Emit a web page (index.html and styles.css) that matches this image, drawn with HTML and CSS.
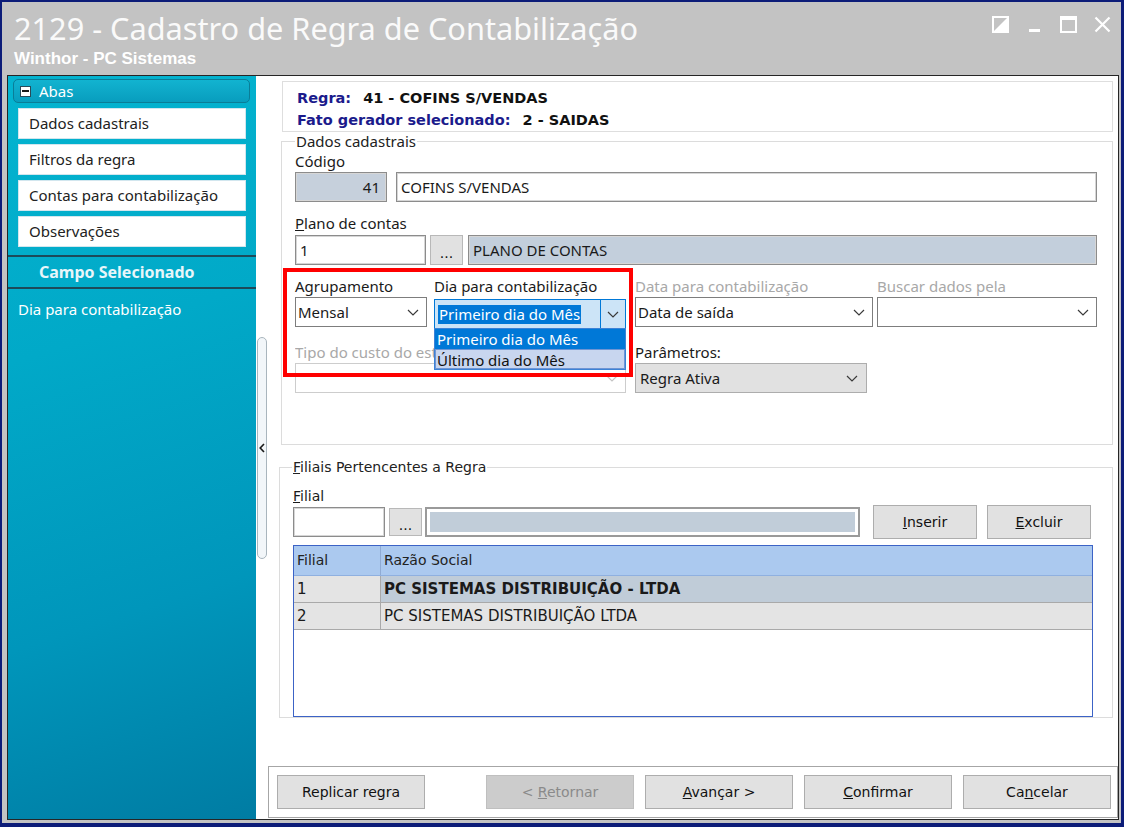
FILE: index.html
```html
<!DOCTYPE html>
<html lang="pt-BR">
<head>
<meta charset="utf-8">
<title>2129 - Cadastro de Regra de Contabilização</title>
<link rel="stylesheet" href="styles.css">
</head>
<body>
<div class="app">
  <div class="window">
    <header class="titlebar">
      <div class="titles">
        <div class="title">2129 - Cadastro de Regra de Contabilização</div>
        <div class="subtitle">Winthor - PC Sistemas</div>
      </div>
      <div class="controls">
        <svg viewBox="0 0 17 17"><rect x="1" y="1" width="15" height="15" fill="none" stroke="#fff" stroke-width="2"/><polygon points="16,1 16,16 1,16" fill="#fff"/></svg>
        <svg viewBox="0 0 17 17"><rect x="3" y="13" width="11" height="3" fill="#fff"/></svg>
        <svg viewBox="0 0 17 17"><rect x="1" y="1" width="15" height="15" fill="none" stroke="#fff" stroke-width="2"/><rect x="0" y="0" width="17" height="4" fill="#fff"/></svg>
        <svg viewBox="0 0 17 17"><path d="M1.5 1.5 L15.5 15.5 M15.5 1.5 L1.5 15.5" stroke="#fff" stroke-width="2.2" fill="none"/></svg>
      </div>
    </header>
    <div class="frame">
      <aside class="sidebar">
        <div class="abas-head"><span class="minus-box"></span><span>Abas</span></div>
        <ul class="tabs">
          <li>Dados cadastrais</li>
          <li>Filtros da regra</li>
          <li>Contas para contabilização</li>
          <li>Observações</li>
        </ul>
        <div class="campo-head">Campo Selecionado</div>
        <div class="campo-value">Dia para contabilização</div>
      </aside>
      <div class="splitter">
        <div class="split-bar">
          <svg viewBox="0 0 6 10" class="split-chev"><polyline points="5,1 1.2,5 5,9" fill="none" stroke="#1a1a1a" stroke-width="1.6"/></svg>
        </div>
      </div>
      <main class="main">
        <div class="content">
          <div class="info-panel">
            <div><span class="info-key">Regra:</span><span class="info-val">41 - COFINS S/VENDAS</span></div>
            <div><span class="info-key">Fato gerador selecionado:</span><span class="info-val">2 - SAIDAS</span></div>
          </div>

          <fieldset class="group dados">
            <legend class="legend">Dados cadastrais</legend>
            <div class="dados-body">
              <div class="lbl first">Código</div>
              <div class="row code-row">
                <div class="input code">41</div>
                <div class="input name">COFINS S/VENDAS</div>
              </div>
              <div class="lbl gap12"><u>P</u>lano de contas</div>
              <div class="row plano-row">
                <div class="input plano">1</div>
                <div class="dots">...</div>
                <div class="input desc">PLANO DE CONTAS</div>
              </div>
              <div class="rows34">
                <div class="redbox"></div>
                <div class="row fields">
                  <div class="field w-agr">
                    <div class="lbl gap12">Agrupamento</div>
                    <div class="combo">
                      <span class="ctext">Mensal</span>
                      <svg class="chev" viewBox="0 0 12 7"><polyline points="1,1 6,6 11,1"/></svg>
                    </div>
                  </div>
                  <div class="field w-dia">
                    <div class="lbl gap12">Dia para contabilização</div>
                    <div class="combo-wrap">
                      <div class="combo focus">
                        <span class="ctext"><span class="hl">Primeiro dia do Mês</span></span>
                        <span class="dbtn"><svg class="chev" viewBox="0 0 12 7"><polyline points="1,1 6,6 11,1"/></svg></span>
                      </div>
                      <ul class="droplist">
                        <li class="on">Primeiro dia do Mês</li>
                        <li class="hov">Último dia do Mês</li>
                      </ul>
                    </div>
                  </div>
                  <div class="field w-data">
                    <div class="lbl gap12 dis">Data para contabilização</div>
                    <div class="combo">
                      <span class="ctext">Data de saída</span>
                      <svg class="chev" viewBox="0 0 12 7"><polyline points="1,1 6,6 11,1"/></svg>
                    </div>
                  </div>
                  <div class="field w-busca">
                    <div class="lbl gap12 dis">Buscar dados pela</div>
                    <div class="combo">
                      <span class="ctext"></span>
                      <svg class="chev" viewBox="0 0 12 7"><polyline points="1,1 6,6 11,1"/></svg>
                    </div>
                  </div>
                </div>
                <div class="row fields">
                  <div class="field w-tipo">
                    <div class="lbl gap14 dis clip">Tipo do custo do estoque</div>
                    <div class="combo disabled">
                      <span class="ctext"></span>
                      <svg class="chev" viewBox="0 0 12 7"><polyline points="1,1 6,6 11,1"/></svg>
                    </div>
                  </div>
                  <div class="field w-param">
                    <div class="lbl gap14">Parâmetros:</div>
                    <div class="combo gray">
                      <span class="ctext">Regra Ativa</span>
                      <svg class="chev" viewBox="0 0 12 7"><polyline points="1,1 6,6 11,1"/></svg>
                    </div>
                  </div>
                </div>
              </div>
            </div>
          </fieldset>

          <fieldset class="group filiais">
            <legend class="legend t"><u>F</u>iliais Pertencentes a Regra</legend>
            <div class="filiais-body">
              <div class="lbl t"><u>F</u>ilial</div>
              <div class="row filial-row">
                <div class="input filial"></div>
                <div class="dots small">...</div>
                <div class="input fdesc"></div>
                <button class="btn t ins"><u>I</u>nserir</button>
                <button class="btn t exc"><u>E</u>xcluir</button>
              </div>
              <div class="grid">
                <div class="grow ghead"><div class="c1">Filial</div><div class="c2">Razão Social</div></div>
                <div class="grow gsel"><div class="c1">1</div><div class="c2">PC SISTEMAS DISTRIBUIÇÃO - LTDA</div></div>
                <div class="grow"><div class="c1">2</div><div class="c2">PC SISTEMAS DISTRIBUIÇÃO LTDA</div></div>
              </div>
            </div>
          </fieldset>
        </div>

        <div class="footer">
          <button class="btn t fbtn wide-after">Replicar regra</button>
          <button class="btn t fbtn off">&lt; <u>R</u>etornar</button>
          <button class="btn t fbtn"><u>A</u>vançar &gt;</button>
          <button class="btn t fbtn"><u>C</u>onfirmar</button>
          <button class="btn t fbtn">Ca<u>n</u>celar</button>
        </div>
      </main>
    </div>
  </div>
</div>
</body>
</html>
```

FILE: styles.css
```css
* { box-sizing: border-box; }
html, body { margin: 0; padding: 0; }
body { background: #0c1c78; }

.app {
  width: 1124px;
  height: 827px;
  background: #0c1c78;
  padding: 2px 3px 4px 2px;
  font-family: "Noto Sans", "Liberation Sans", sans-serif;
  color: #1a1a1a;
}
.window {
  height: 100%;
  background: #c3c3c3;
  display: flex;
  flex-direction: column;
  padding: 0 2px 3px 5px;
}

/* title bar */
.titlebar {
  flex: none;
  height: 73px;
  display: flex;
  justify-content: space-between;
  align-items: flex-start;
}
.titles {
  padding: 9px 0 0 7px;
  color: #fff;
}
.title {
  font-family: "Noto Sans", "Liberation Sans", sans-serif;
  font-size: 30.7px;
  line-height: 35px;
  color: #fafafa;
}
.subtitle {
  font-family: "Liberation Sans", Arial, sans-serif;
  font-size: 17px;
  font-weight: bold;
  line-height: 20px;
  margin-top: 3px;
}
.controls { display: flex; gap: 17px; padding: 14px 8px 0 0; }
.controls svg { width: 17px; height: 17px; display: block; }

/* frame */
.frame {
  flex: 1;
  min-height: 0;
  display: flex;
  border: 1px solid #262626;
}

/* sidebar */
.sidebar {
  flex: none;
  width: 248px;
  background: linear-gradient(162deg, #04b4d0 0%, #01a9c8 35%, #0096bb 70%, #007ca3 100%);
  padding-top: 3px;
}
.abas-head {
  height: 24px;
  margin: 0 6px 0 5px;
  border: 1px solid #0a7d97;
  border-radius: 5px;
  background: linear-gradient(#12b3d0, #089dbe);
  display: flex;
  align-items: center;
  padding-left: 6px;
  color: #fff;
  font-size: 15px;
  line-height: 18px;
}
.minus-box {
  width: 11px;
  height: 11px;
  background: #fff;
  border: 1px solid #2b4a58;
  margin-right: 8px;
  display: flex;
  align-items: center;
  justify-content: center;
}
.minus-box::before {
  content: "";
  width: 7px;
  height: 2px;
  background: #1a1a1a;
}
.tabs {
  list-style: none;
  margin: 5px 0 0 10px;
  padding: 0;
  width: 228px;
  display: flex;
  flex-direction: column;
  gap: 5px;
}
.tabs li {
  height: 31px;
  background: #fff;
  border: 1px solid #d2e6ee;
  padding-left: 10px;
  font-size: 15px;
  line-height: 29px;
  color: #222;
}
.campo-head {
  margin-top: 8px;
  height: 34px;
  border-top: 2px solid #1d4a5a;
  border-bottom: 2px solid #1d4a5a;
  padding-left: 31px;
  font-size: 16px;
  font-weight: bold;
  line-height: 30px;
  color: #e8f6fa;
}
.campo-value {
  padding: 11px 0 0 10px;
  font-size: 15px;
  line-height: 18px;
  color: #fff;
}

/* splitter */
.splitter {
  flex: none;
  width: 12px;
  background: #fff;
}
.split-bar {
  margin: 261px 0 0 1px;
  width: 10px;
  height: 222px;
  border: 1px solid #a9b5bd;
  border-radius: 5px;
  background: #f2f6f9;
  display: flex;
  align-items: center;
  justify-content: center;
}
.split-chev { width: 6px; height: 10px; display: block; }

/* main */
.main {
  flex: 1;
  min-width: 0;
  background: #fff;
  display: flex;
  flex-direction: column;
}
.content { padding: 5px 5px 0 11px; }

.info-panel {
  margin-left: 3px;
  height: 51px;
  border: 1px solid #dedede;
  padding: 5px 0 0 14px;
  font-family: "DejaVu Sans", Verdana, sans-serif;
  font-size: 14.5px;
  font-weight: bold;
  line-height: 22px;
}
.info-key { color: #1b1b8c; }
.info-val { color: #111; margin-left: 12px; }

.group {
  margin: 0;
  padding: 0;
  border: 1px solid #dcdcdc;
  min-width: 0;
}
.legend {
  padding: 0 1px;
  font-size: 15px;
  line-height: 16px;
  color: #222;
}
.dados { margin: 1px 0 0 2px; }
.dados .legend { margin-left: 13px; }
.dados-body { padding: 0 15px 51px 13px; }

.lbl { font-size: 15px; line-height: 18px; color: #1a1a1a; white-space: nowrap; }
.lbl.first { margin-top: 3px; }
.lbl.gap12 { margin-top: 12px; }
.lbl.gap14 { margin-top: 14px; }
.lbl.dis { color: #a8a8a8; }
.lbl.clip { width: 139px; overflow: hidden; }

.row { display: flex; }
.code-row { margin-top: 2px; gap: 9px; }
.plano-row { margin-top: 3px; }

.input {
  height: 30px;
  border: 1px solid #8c8c8c;
  box-shadow: inset 0 0 0 1px #d6d6d6;
  background: #fff;
  display: flex;
  align-items: center;
  padding-left: 4px;
  font-size: 15px;
  white-space: nowrap;
}
.input.code {
  width: 92px;
  background: #c6d0dc;
  justify-content: flex-end;
  padding-right: 6px;
}
.input.name { flex: 1; }
.input.plano { width: 131px; }
.input.desc { flex: 1; background: #c3cfdc; margin-left: 5px; }

.dots {
  flex: none;
  width: 33px;
  height: 30px;
  margin-left: 4px;
  background: #e1e1e1;
  border: 1px solid #b8b8b8;
  color: #111;
  font-family: "DejaVu Sans", Verdana, sans-serif;
  font-size: 14px;
  line-height: 16px;
  text-align: center;
  padding-top: 9px;
}

.rows34 { position: relative; }
.redbox {
  position: absolute;
  top: 3px;
  left: -12px;
  width: 350px;
  height: 109px;
  border: 4px solid #ff0000;
  pointer-events: none;
  z-index: 3;
}
.fields .field { display: flex; flex-direction: column; }
.fields .combo, .fields .combo-wrap { margin-top: 2px; }
.w-agr { width: 132px; }
.w-dia { width: 192px; margin-left: 7px; }
.w-data { width: 238px; margin-left: 9px; }
.w-busca { width: 220px; margin-left: 4px; }
.w-tipo { width: 331px; }
.w-param { width: 232px; margin-left: 9px; }

.combo {
  height: 30px;
  border: 1px solid #7d7d7d;
  background: #fff;
  display: flex;
  align-items: center;
  padding-left: 2px;
  font-size: 15px;
  line-height: 19px;
  white-space: nowrap;
}
.ctext { flex: 1; overflow: hidden; }
.chev {
  width: 12px;
  height: 7px;
  margin-right: 7px;
  fill: none;
  stroke: #3a3a3a;
  stroke-width: 1.2;
  flex: none;
}
.combo.disabled { border-color: #cdcdcd; }
.combo.disabled .chev { stroke: #c4c4c4; }
.combo.gray { background: #e1e1e1; border-color: #adadad; padding-left: 4px; }
.combo.gray .chev { margin-right: 8px; }

.combo-wrap { position: relative; }
.combo.focus {
  border-color: #0078d7;
  background: #cce4f7;
  padding-left: 3px;
}
.hl { background: #0078d7; color: #fff; padding: 0 1px; display: inline-block; line-height: 19px; }
.dbtn {
  width: 25px;
  align-self: stretch;
  border-left: 1px solid #0078d7;
  display: flex;
  align-items: center;
  justify-content: center;
  background: #cce4f7;
}
.dbtn .chev { margin-right: 0; }
.droplist {
  position: absolute;
  top: 31px;
  left: 0;
  width: 192px;
  height: 42px;
  margin: 0;
  padding: 0;
  list-style: none;
  border: 1px solid #3c82d6;
  background: #fff;
  z-index: 2;
  font-size: 15px;
}
.droplist li { height: 20px; line-height: 20px; padding-left: 2px; white-space: nowrap; }
.droplist li.on { background: #0078d7; color: #fff; }
.droplist li.hov { background: #c8d6ef; border: 1px solid #6f95d4; padding-left: 1px; line-height: 20px; color: #111; }

/* filiais */
.t { font-family: "DejaVu Sans", Verdana, sans-serif; font-size: 14px; }
.filiais { margin-top: 14px; }
.filiais .legend { margin-left: 12px; font-size: 14px; }
.filiais-body { padding: 0 20px 0 13px; }
.filiais-body .lbl { margin-top: 12px; font-size: 14px; }
.filial-row { height: 34px; align-items: center; }
.input.filial { width: 92px; }
.dots.small { height: 28px; width: 33px; margin-left: 4px; padding-top: 8px; }
.input.fdesc {
  width: 435px;
  margin-left: 3px;
  border: 2px solid #9a9a9a;
  box-shadow: inset 0 0 0 3px #fff;
  background: #c1cdd9;
}
.btn {
  height: 34px;
  background: #e1e1e1;
  border: 1px solid #adadad;
  color: #111;
  padding: 0;
  margin: 0;
  cursor: default;
}
.ins { width: 104px; margin-left: 13px; }
.exc { width: 104px; margin-left: 10px; }

.grid {
  margin-top: 6px;
  width: 800px;
  height: 172px;
  border: 1px solid #3c63c6;
  background: #fff;
}
.grow {
  display: grid;
  grid-template-columns: 87px 1fr;
  height: 27px;
  border-bottom: 1px solid #a9a9a9;
  background: #e4e4e4;
  font-family: "DejaVu Sans", Verdana, sans-serif;
  font-size: 15px;
  line-height: 26px;
  white-space: nowrap;
}
.grow .c1 { border-right: 1px solid #a9a9a9; padding-left: 3px; }
.grow .c2 { padding-left: 3px; }
.ghead {
  height: 30px;
  background: #abc9ef;
  border-bottom: 1px solid #8fb0e0;
  font-size: 14px;
  line-height: 29px;
  color: #222;
}
.ghead .c1 { border-right-color: #8fabd4; }
.gsel .c2 { background: #c0ccd8; font-weight: bold; }

/* footer */
.footer {
  margin-top: auto;
  margin-bottom: 1px;
  height: 52px;
  border: 1px solid #a6a6a6;
  box-shadow: inset 1px 1px 0 #fff;
  display: flex;
  align-items: center;
  padding-left: 8px;
  gap: 11px;
}
.fbtn { width: 148px; font-size: 14px; }
.fbtn.wide-after { margin-right: 50px; }
.fbtn.off { background: #cccccc; border-color: #bfbfbf; color: #8a8a8a; }
```
